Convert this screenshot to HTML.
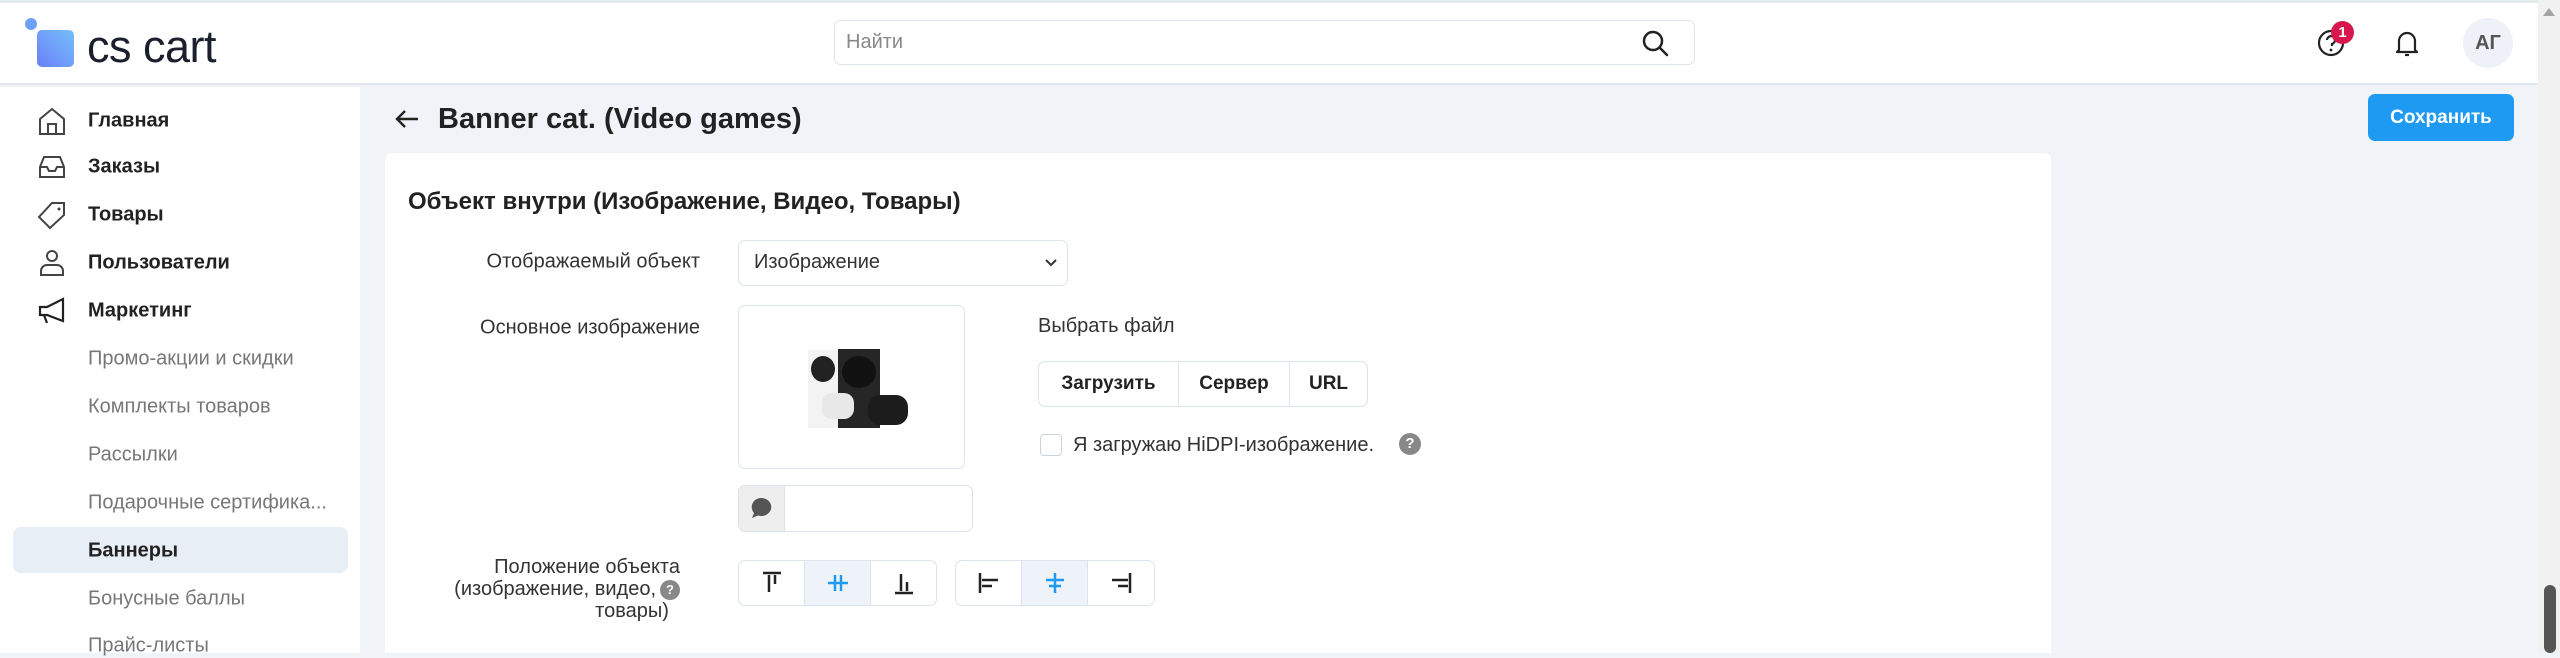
<!DOCTYPE html>
<html><head><meta charset="utf-8"><style>
*{box-sizing:border-box;margin:0;padding:0}
body{width:2560px;height:653px;overflow:hidden;background:#f0f3f8;font-family:"Liberation Sans","DejaVu Sans",sans-serif;color:#222;position:relative}
.a{position:absolute}
.hdr{left:0;top:0;width:2538px;height:85px;background:#fff;border-top:3px solid #e3ecec;border-bottom:2px solid #e1e6ef}
.side{left:0;top:87px;width:360px;height:566px;background:#fff}
.mi{position:absolute;left:88px;font-size:20px;font-weight:bold;color:#222;transform:translateY(-50%)}
.si{position:absolute;left:88px;font-size:20px;color:#777;transform:translateY(-50%)}
.ic{position:absolute;left:36px;width:32px;height:32px;transform:translateY(-50%)}
.lbl{position:absolute;right:1860px;font-size:20px;color:#333;text-align:right;transform:translateY(-50%)}
.box{position:absolute;border:1.5px solid #dde3ec;border-radius:7px;background:#fff}
.seg{position:absolute;top:0;bottom:0;display:flex;align-items:center;justify-content:center}
</style></head><body>
<div class="a hdr"></div>
<div class="a" style="left:37px;top:30px;width:37px;height:37px;border-radius:5px;background:linear-gradient(45deg,#6a7ff8,#75c0fb)"></div>
<div class="a" style="left:25px;top:18px;width:12px;height:12px;border-radius:50%;background:#6ea0f8"></div>
<div class="a" style="left:87px;top:21px;font-size:45px;color:#1b1f2e;letter-spacing:-0.5px">cs cart</div>
<div class="a" style="left:834px;top:20px;width:861px;height:45px;border:1.5px solid #dde3ec;border-radius:7px;background:#fff"></div>
<div class="a" style="left:846px;top:31px;font-size:20px;color:#888">Найти</div>
<svg class="a" style="left:1640px;top:28px" width="30" height="30" viewBox="0 0 30 30"><circle cx="13" cy="13" r="9" fill="none" stroke="#222" stroke-width="2.5"/><path d="M20 20l7 7" stroke="#222" stroke-width="2.5" stroke-linecap="round"/></svg>
<svg class="a" style="left:2316px;top:28px" width="30" height="30" viewBox="0 0 30 30"><circle cx="15" cy="15" r="12" fill="none" stroke="#222" stroke-width="2.2"/><path d="M11 12a4 4 0 1 1 5 4v2" fill="none" stroke="#222" stroke-width="2.2"/><circle cx="15" cy="22" r="1.4" fill="#222"/></svg>
<div class="a" style="left:2331px;top:21px;width:23px;height:23px;border-radius:50%;background:#d8174d;color:#fff;font-size:15px;font-weight:bold;text-align:center;line-height:23px">1</div>
<svg class="a" style="left:2392px;top:28px" width="30" height="30" viewBox="0 0 30 30"><path d="M7 22V13a8 8 0 0 1 16 0v9l2 2H5z" fill="none" stroke="#222" stroke-width="2.2" stroke-linejoin="round"/><path d="M13 27h4" stroke="#222" stroke-width="2.2"/></svg>
<div class="a" style="left:2463px;top:18px;width:50px;height:50px;border-radius:50%;background:#eef2f8;color:#555;font-size:20px;font-weight:bold;text-align:center;line-height:50px">АГ</div>
<div class="a" style="left:2538px;top:0;width:22px;height:653px;background:#f1f1f1"></div>
<div class="a" style="left:2543px;top:8px;width:0;height:0;border-left:6px solid transparent;border-right:6px solid transparent;border-bottom:8px solid #a3a3a3"></div>
<div class="a" style="left:2544px;top:585px;width:12px;height:68px;border-radius:6px;background:#555"></div>
<div class="a side"></div>
<div class="a" style="left:13px;top:527px;width:335px;height:46px;border-radius:8px;background:#e8eef6"></div>
<svg class="ic" style="top:121px" viewBox="0 0 32 32"><path d="M4 14L16 4l12 10v15H4z M12 29V19h8v10" fill="none" stroke="#444" stroke-width="2"/></svg>
<svg class="ic" style="top:167px" viewBox="0 0 32 32"><path d="M4 16l4-10h16l4 10v10H4z M4 16h7l2 4h6l2-4h7" fill="none" stroke="#444" stroke-width="2"/></svg>
<svg class="ic" style="top:215px" viewBox="0 0 32 32"><path d="M16 4h12v12L14 29 3 18z" fill="none" stroke="#444" stroke-width="2"/><circle cx="23" cy="10" r="1.5" fill="#444"/></svg>
<svg class="ic" style="top:263px" viewBox="0 0 32 32"><circle cx="16" cy="9" r="5" fill="none" stroke="#444" stroke-width="2"/><path d="M5 28v-4a6 6 0 0 1 6-6h10a6 6 0 0 1 6 6v4z" fill="none" stroke="#444" stroke-width="2"/></svg>
<svg class="ic" style="top:311px" viewBox="0 0 32 32"><path d="M4 12h7l16-8v22L11 20H4z M8 20l3 8" fill="none" stroke="#222" stroke-width="2.2"/></svg>
<div class="mi" style="top:121px">Главная</div>
<div class="mi" style="top:167px">Заказы</div>
<div class="mi" style="top:215px">Товары</div>
<div class="mi" style="top:263px">Пользователи</div>
<div class="mi" style="top:311px">Маркетинг</div>
<div class="si" style="top:359px">Промо-акции и скидки</div>
<div class="si" style="top:407px">Комплекты товаров</div>
<div class="si" style="top:455px">Рассылки</div>
<div class="si" style="top:503px">Подарочные сертифика...</div>
<div class="mi" style="top:551px">Баннеры</div>
<div class="si" style="top:599px">Бонусные баллы</div>
<div class="si" style="top:646px">Прайс-листы</div>
<svg class="a" style="left:394px;top:107px" width="26" height="24" viewBox="0 0 26 24"><path d="M24 12H3 M11 4l-8 8 8 8" fill="none" stroke="#222" stroke-width="2.4"/></svg>
<div class="a" style="left:438px;top:103px;font-size:29px;font-weight:bold;color:#222">Banner cat. (Video games)</div>
<div class="a" style="left:2368px;top:94px;width:146px;height:47px;border-radius:7px;background:#1e9af3;color:#fff;font-size:19px;font-weight:bold;text-align:center;line-height:47px">Сохранить</div>
<div class="a" style="left:385px;top:153px;width:1666px;height:500px;background:#fff;border-radius:6px 6px 0 0"></div>
<div class="a" style="left:408px;top:188px;font-size:24px;font-weight:bold;color:#222">Объект внутри (Изображение, Видео, Товары)</div>
<div class="lbl" style="top:262px">Отображаемый объект</div>
<div class="box" style="left:738px;top:240px;width:330px;height:46px"></div>
<div class="a" style="left:754px;top:251px;font-size:20px;color:#333">Изображение</div>
<svg class="a" style="left:1044px;top:257px" width="14" height="12" viewBox="0 0 14 12"><path d="M2 3l5 5 5-5" fill="none" stroke="#333" stroke-width="2"/></svg>
<div class="lbl" style="top:328px">Основное изображение</div>
<div class="box" style="left:738px;top:305px;width:227px;height:164px"></div>
<div class="a" style="left:808px;top:350px;width:30px;height:78px;background:#f3f3f3"></div>
<div class="a" style="left:811px;top:356px;width:24px;height:26px;border-radius:50%;background:#222"></div>
<div class="a" style="left:838px;top:349px;width:42px;height:79px;background:#262626"></div>
<div class="a" style="left:842px;top:356px;width:34px;height:32px;border-radius:50%;background:#111"></div>
<div class="a" style="left:822px;top:393px;width:32px;height:26px;border-radius:10px;background:#e8e8e8"></div>
<div class="a" style="left:868px;top:395px;width:40px;height:30px;border-radius:12px;background:#1c1c1c"></div>
<div class="box" style="left:738px;top:485px;width:235px;height:47px;overflow:hidden"><div style="position:absolute;left:0;top:0;width:46px;height:100%;background:#eee;border-right:1.5px solid #dde3ec"></div></div>
<svg class="a" style="left:748px;top:495px" width="26" height="26" viewBox="0 0 26 26"><path d="M13 3a10 9 0 1 1-3 17.5L4 23l2-5A9 9 0 0 1 13 3z" fill="#555"/></svg>
<div class="a" style="left:1038px;top:315px;font-size:20px;color:#333">Выбрать файл</div>
<div class="box" style="left:1038px;top:361px;width:330px;height:46px">
<div class="seg" style="left:0;width:140px;border-right:1.5px solid #dde3ec;font-weight:bold;font-size:19px">Загрузить</div>
<div class="seg" style="left:140px;width:111px;border-right:1.5px solid #dde3ec;font-weight:bold;font-size:19px">Сервер</div>
<div class="seg" style="left:251px;width:77px;font-weight:bold;font-size:19px">URL</div>
</div>
<div class="a" style="left:1040px;top:434px;width:22px;height:22px;border:1.5px solid #ccd3de;border-radius:4px"></div>
<div class="a" style="left:1073px;top:434px;font-size:20px;color:#333">Я загружаю HiDPI-изображение.</div>
<div class="a" style="left:1399px;top:433px;width:22px;height:22px;border-radius:50%;background:#888;color:#fff;font-size:15px;font-weight:bold;text-align:center;line-height:22px">?</div>
<div class="a" style="left:440px;top:556px;width:240px;text-align:right;font-size:20px;color:#333;line-height:22px">Положение объекта<br>(изображение, видео,<span style="display:inline-block;width:20px;height:20px;border-radius:50%;background:#888;color:#fff;font-size:13px;font-weight:bold;text-align:center;line-height:20px;margin-left:4px;vertical-align:1px">?</span><br>товары)&nbsp;&nbsp;</div>
<div class="box" style="left:738px;top:560px;width:199px;height:46px;overflow:hidden">
<div class="seg" style="left:0;width:66px;border-right:1.5px solid #dde3ec"><svg width="26" height="26" viewBox="0 0 26 26"><path d="M4 3h18M10 5v17M16 5v9" stroke="#222" stroke-width="2.5"/></svg></div>
<div class="seg" style="left:66px;width:66px;border-right:1.5px solid #dde3ec;background:#eef3f9"><svg width="26" height="26" viewBox="0 0 26 26"><path d="M3 13h20M10 5v16M16 5v16" stroke="#1e9af3" stroke-width="2.5"/></svg></div>
<div class="seg" style="left:132px;width:66px"><svg width="26" height="26" viewBox="0 0 26 26"><path d="M4 23h18M10 4v17M16 12v9" stroke="#222" stroke-width="2.5"/></svg></div>
</div>
<div class="box" style="left:955px;top:560px;width:200px;height:46px;overflow:hidden">
<div class="seg" style="left:0;width:66px;border-right:1.5px solid #dde3ec"><svg width="26" height="26" viewBox="0 0 26 26"><path d="M4 3v20M6 10h16M6 16h10" stroke="#222" stroke-width="2.5"/></svg></div>
<div class="seg" style="left:66px;width:66px;border-right:1.5px solid #dde3ec;background:#eef3f9"><svg width="26" height="26" viewBox="0 0 26 26"><path d="M13 3v20M4 10h18M7 16h12" stroke="#1e9af3" stroke-width="2.5"/></svg></div>
<div class="seg" style="left:132px;width:66px"><svg width="26" height="26" viewBox="0 0 26 26"><path d="M22 3v20M4 10h16M10 16h10" stroke="#222" stroke-width="2.5"/></svg></div>
</div>
</body></html>
